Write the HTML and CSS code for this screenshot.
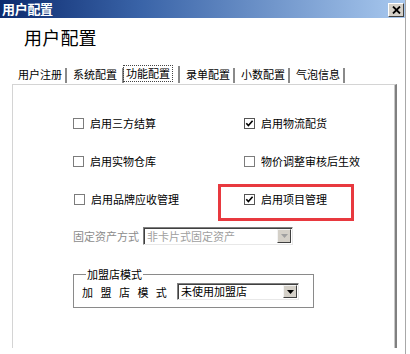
FILE: index.html
```html
<!DOCTYPE html>
<html lang="zh-CN">
<head>
<meta charset="utf-8">
<title>用户配置</title>
<link rel="stylesheet" href="styles.css">
</head>
<body>
<div class="window">
  <div class="titlebar">
    <span class="title">用户配置</span>
    <span class="close"><svg width="9" height="8" viewBox="0 0 9 8"><path d="M1 0.5 L8 7.5 M8 0.5 L1 7.5" stroke="#000" stroke-width="1.8"/></svg></span>
  </div>
  <div class="content">
    <h1 class="heading">用户配置</h1>
    <div class="tabs">
      <span class="tab">用户注册</span>
      <span class="tab">系统配置</span>
      <span class="tab active"><span class="focus">功能配置</span></span>
      <span class="tab">录单配置</span>
      <span class="tab">小数配置</span>
      <span class="tab">气泡信息</span>
    </div>
    <div class="panel">
      <div class="options">
        <label class="opt"><svg class="cb" width="11" height="11" viewBox="0 0 11 11"><rect x="0.5" y="0.5" width="10" height="10" fill="#fff" stroke="#7c7c7c"/></svg><span>启用三方结算</span></label>
        <label class="opt"><svg class="cb" width="11" height="11" viewBox="0 0 11 11"><rect x="0.5" y="0.5" width="10" height="10" fill="#fff" stroke="#555"/><path d="M2.3 5.2 L4.4 7.6 L8.6 2.8" fill="none" stroke="#000" stroke-width="1.6"/></svg><span>启用物流配货</span></label>
        <label class="opt"><svg class="cb" width="11" height="11" viewBox="0 0 11 11"><rect x="0.5" y="0.5" width="10" height="10" fill="#fff" stroke="#7c7c7c"/></svg><span>启用实物仓库</span></label>
        <label class="opt"><svg class="cb" width="11" height="11" viewBox="0 0 11 11"><rect x="0.5" y="0.5" width="10" height="10" fill="#fff" stroke="#7c7c7c"/></svg><span>物价调整审核后生效</span></label>
        <label class="opt"><svg class="cb" width="11" height="11" viewBox="0 0 11 11"><rect x="0.5" y="0.5" width="10" height="10" fill="#fff" stroke="#7c7c7c"/></svg><span>启用品牌应收管理</span></label>
        <label class="opt marked"><svg class="cb" width="11" height="11" viewBox="0 0 11 11"><rect x="0.5" y="0.5" width="10" height="10" fill="#fff" stroke="#555"/><path d="M2.3 5.2 L4.4 7.6 L8.6 2.8" fill="none" stroke="#000" stroke-width="1.6"/></svg><span>启用项目管理</span></label>
      </div>
      <div class="asset-row">
        <span class="asset-label">固定资产方式</span>
        <div class="combo disabled asset-combo">
          <span class="combo-text">非卡片式固定资产</span>
          <span class="combo-btn"><svg width="7" height="4" viewBox="0 0 7 4"><path d="M0 0 H7 L3.5 4 Z" fill="#a0a0a0"/></svg></span>
        </div>
      </div>
      <fieldset class="group">
        <legend class="group-title">加盟店模式</legend>
        <div class="group-row">
          <span class="group-label">加 盟 店 模 式</span>
          <div class="combo store-combo">
            <span class="combo-text">未使用加盟店</span>
            <span class="combo-btn"><svg width="7" height="4" viewBox="0 0 7 4"><path d="M0 0 H7 L3.5 4 Z" fill="#000"/></svg></span>
          </div>
        </div>
      </fieldset>
    </div>
  </div>
</div>
</body>
</html>
```

FILE: styles.css
```css
* { box-sizing: border-box; }
html, body { margin: 0; padding: 0; background: #fff; }
body {
  font-family: "Noto Sans CJK SC", "Noto Sans", sans-serif;
  font-size: 11px;
  color: #000;
  width: 410px;
  height: 354px;
  overflow: hidden;
}
.window {
  width: 406px;
  height: 354px;
  border-right: 1px solid #a8a8a8;
  display: flex;
  flex-direction: column;
}
.titlebar {
  height: 18px;
  flex: none;
  display: flex;
  align-items: center;
  justify-content: space-between;
  padding: 0 1px 0 2px;
  background: linear-gradient(to right, #0c2a6e 0%, #3a64a8 35%, #a8c8ee 100%);
}
.title {
  color: #fff;
  font-weight: bold;
  font-size: 13px;
  line-height: 16px;
  letter-spacing: -0.3px;
}
.close {
  width: 16px;
  height: 14px;
  background: #d4d0c8;
  border-top: 1px solid #fff;
  border-left: 1px solid #fff;
  border-right: 1px solid #404040;
  border-bottom: 1px solid #404040;
  display: flex;
  align-items: center;
  justify-content: center;
  margin-top: 1px;
}
.content {
  flex: 1;
  display: flex;
  flex-direction: column;
  padding-left: 12px;
}
.heading {
  margin: 9px 0 0 12px;
  font-size: 18px;
  font-weight: normal;
  line-height: 20px;
  letter-spacing: 0.2px;
}
.tabs {
  display: flex;
  margin-top: 20px;
  height: 17px;
  align-items: flex-end;
}
.tab {
  height: 15px;
  width: 55px;
  padding-left: 6px;
  line-height: 13px;
  border-right: 2px solid #8a8a8a;
  margin-bottom: 1px;
  white-space: nowrap;
}
.tab:nth-child(2) { width: 57px; }
.tab.active { width: 56px; padding-left: 0; height: 17px; line-height: 15px; }
.focus {
  display: inline-block;
  outline: 1px dotted #444;
  outline-offset: 0;
  padding: 0 2px;
  height: 15px;
}
.panel {
  width: 385px;
  height: 264px;
  border-top: 1px solid #d4d4d4;
  border-left: 1px solid #d4d4d4;
  border-right: 2px solid #808080;
  box-shadow: inset -1px 0 #c8c8c8;
  padding: 30px 0 0 60px;
  display: flex;
  flex-direction: column;
  align-items: flex-start;
}
.options {
  display: grid;
  grid-template-columns: 171px auto;
  grid-auto-rows: 16px;
  row-gap: 22px;
}
.opt {
  display: flex;
  align-items: center;
  gap: 6px;
  white-space: nowrap;
  position: relative;
  justify-self: start;
}
.opt:nth-child(5) { margin-left: 1px; }
.cb { flex: none; }
.marked::after {
  content: "";
  position: absolute;
  left: -26px;
  right: -27px;
  top: -7px;
  bottom: -14px;
  border: 3px solid #e8393f;
}
.asset-row {
  display: flex;
  align-items: center;
  gap: 4px;
  margin-top: 20px;
  height: 18px;
}
.asset-label { color: #8c8c8c; }
.combo {
  display: flex;
  align-items: center;
  justify-content: space-between;
  background: #fff;
  border-top: 1px solid #808080;
  border-left: 1px solid #808080;
  border-right: 1px solid #e8e8e8;
  border-bottom: 1px solid #e8e8e8;
  box-shadow: inset 1px 1px #404040;
  padding: 1px 1px 1px 3px;
}
.asset-combo { width: 150px; height: 18px; }
.store-combo { width: 122px; height: 17px; }
.combo-text { line-height: 13px; white-space: nowrap; }
.disabled .combo-text { color: #a0a0a0; }
.combo-btn {
  width: 14px;
  height: 14px;
  background: #d4d0c8;
  border-top: 1px solid #f4f4f4;
  border-left: 1px solid #f4f4f4;
  border-right: 1px solid #404040;
  border-bottom: 1px solid #404040;
  display: flex;
  align-items: center;
  justify-content: center;
}
.store-combo .combo-btn { height: 13px; }
.group {
  margin: 23px 0 0 0;
  width: 241px;
  border: 1px solid #8a8a8a;
  padding: 3px 8px 7px 8px;
}
.group-title {
  padding: 0 1px;
  margin-left: 4px;
  line-height: 12px;
}
.group-row {
  display: flex;
  align-items: center;
}
.group-label {
  width: 95px;
  white-space: pre;
  letter-spacing: 3px;
  word-spacing: -1px;
}
```
